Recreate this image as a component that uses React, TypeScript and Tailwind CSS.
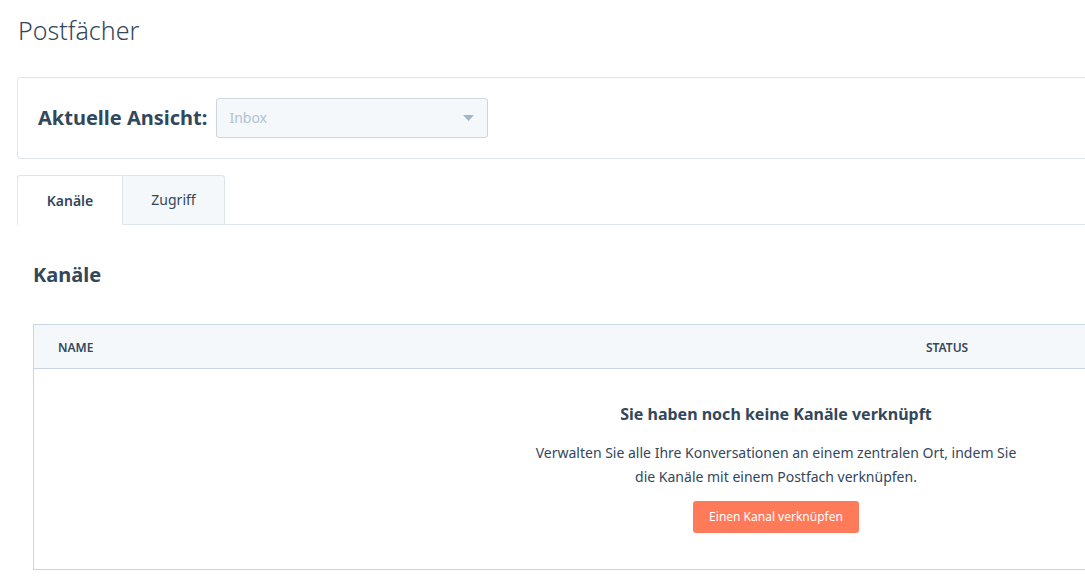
const font = { fontFamily: '"Noto Sans", "Open Sans", sans-serif' };

function Caret() {
  return (
    <svg width="11" height="6" viewBox="0 0 11 6" className="shrink-0">
      <path d="M0 0h11L5.5 6z" fill="#a4b6c9" />
    </svg>
  );
}

function Tabs() {
  return (
    <div className="flex h-[50px]">
      <div className="flex w-[105px] items-center justify-center rounded-tl-[3px] border-l border-t border-[#dfe3eb] bg-white text-sm font-semibold text-[#33475b]">
        Kanäle
      </div>
      <div className="flex w-[103px] items-center justify-center rounded-tr-[3px] border border-[#dfe3eb] bg-[#f5f8fa] text-sm text-[#33475b]">
        Zugriff
      </div>
      <div className="flex-1 border-b border-[#dfe3eb]" />
    </div>
  );
}

function EmptyState() {
  return (
    <div className="flex flex-col items-center pt-[33px]">
      <h3 className="text-base font-bold leading-6 text-[#33475b]">
        Sie haben noch keine Kanäle verknüpft
      </h3>
      <p className="mt-[15px] w-[500px] text-center text-sm leading-6 text-[#33475b]">
        Verwalten Sie alle Ihre Konversationen an einem zentralen Ort, indem Sie
        die Kanäle mit einem Postfach verknüpfen.
      </p>
      <button className="mt-[12px] h-[32px] rounded-[3px] bg-[#ff7a59] px-[16px] text-xs text-white">
        Einen Kanal verknüpfen
      </button>
    </div>
  );
}

export default function App() {
  return (
    <div className="h-[579px] w-[1085px] overflow-hidden bg-white" style={font}>
      <div className="w-[1540px] pl-[17px] pt-[14px]">
        <h1 className="ml-px text-[25px] font-light leading-8 text-[#33475b]">Postfächer</h1>

        <div className="mt-[31px] flex h-[82px] w-[1503px] items-center rounded-[3px] border border-[#dfe3eb] px-[20px]">
          <span className="text-xl font-bold text-[#33475b]">Aktuelle Ansicht:</span>
          <div className="ml-[9px] flex h-[40px] w-[272px] items-center justify-between rounded-[3px] border border-[#cbd6e2] bg-[#f5f8fa] pl-[12px] pr-[13px]">
            <span className="text-sm text-[#b0c1d4]">Inbox</span>
            <Caret />
          </div>
        </div>

        <div className="mt-[16px]">
          <Tabs />
        </div>

        <div className="pl-[16px]">
          <h2 className="mt-[36px] text-xl font-bold leading-7 text-[#33475b]">Kanäle</h2>

          <div className="mt-[35px] w-[1486px] border border-[#cbd6e2]">
            <div className="flex h-[44px] items-center border-b border-[#cbd6e2] bg-[#f5f8fa] pt-[3px] text-xs font-semibold uppercase text-[#33475b]">
              <div className="w-[892px] pl-[24px]">Name</div>
              <div>Status</div>
            </div>
            <div className="h-[200px]">
              <EmptyState />
            </div>
          </div>
        </div>
      </div>
    </div>
  );
}
